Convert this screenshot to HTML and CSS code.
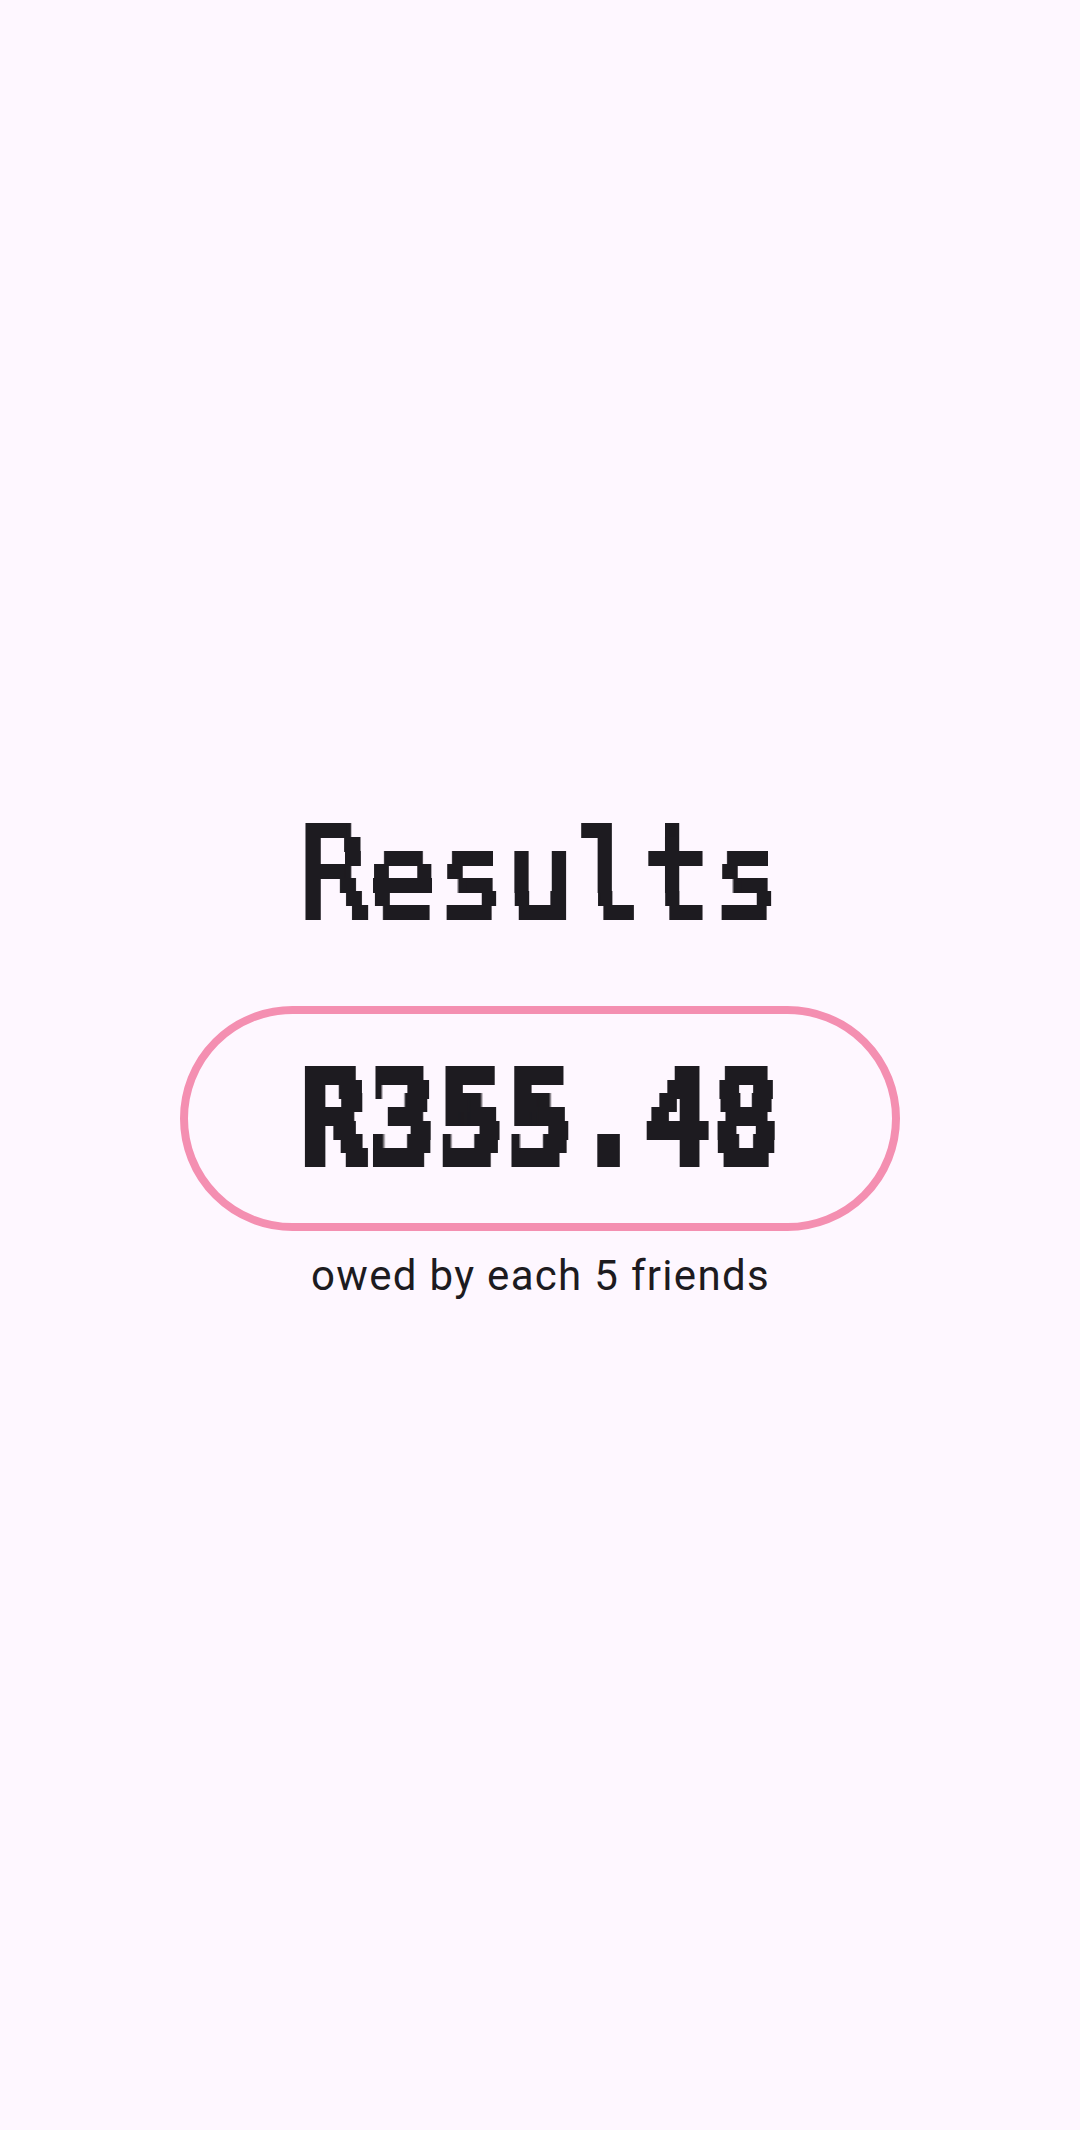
FILE: index.html
```html
<!DOCTYPE html>
<html lang="en">
<head>
<meta charset="utf-8">
<title>Results</title>
<link rel="stylesheet" href="styles.css">
</head>
<body>
<!-- Scanline filters: sample seven rows of the lettering, then thicken each row into a block -->
<svg class="defs" width="0" height="0" aria-hidden="true">
  <filter id="rows-regular" filterUnits="userSpaceOnUse" primitiveUnits="userSpaceOnUse" x="0" y="0" width="520" height="140" color-interpolation-filters="sRGB">
    <feFlood x="0" y="28" width="520" height="1" result="a"/>
    <feFlood x="0" y="44" width="520" height="1" result="b"/>
    <feFlood x="0" y="52" width="520" height="1" result="c"/>
    <feFlood x="0" y="71" width="520" height="1" result="d"/>
    <feFlood x="0" y="85" width="520" height="1" result="e"/>
    <feFlood x="0" y="98" width="520" height="1" result="f"/>
    <feFlood x="0" y="112" width="520" height="1" result="g"/>
    <feMerge result="rows"><feMergeNode in="b"/><feMergeNode in="d"/><feMergeNode in="e"/><feMergeNode in="f"/><feMergeNode in="g"/></feMerge>
    <feComposite in="SourceGraphic" in2="rows" operator="in" result="body"/>
    <feComposite in="SourceGraphic" in2="a" operator="in"/>
    <feOffset dy="2" result="cap"/>
    <feComposite in="SourceGraphic" in2="c" operator="in"/>
    <feOffset dy="6" result="waist"/>
    <feMerge><feMergeNode in="body"/><feMergeNode in="cap"/><feMergeNode in="waist"/></feMerge>
    <feMorphology operator="dilate" radius="1 6.5"/>
  </filter>
  <filter id="rows-bold" filterUnits="userSpaceOnUse" primitiveUnits="userSpaceOnUse" x="0" y="0" width="520" height="139" color-interpolation-filters="sRGB">
    <feFlood x="0" y="26" width="520" height="1" result="a"/>
    <feFlood x="0" y="39" width="520" height="1" result="b"/>
    <feFlood x="0" y="53" width="520" height="1" result="c"/>
    <feFlood x="0" y="67" width="520" height="1" result="d"/>
    <feFlood x="0" y="81" width="520" height="1" result="e"/>
    <feFlood x="0" y="96" width="520" height="1" result="f"/>
    <feFlood x="0" y="108" width="520" height="1" result="g"/>
    <feMerge result="rows"><feMergeNode in="a"/><feMergeNode in="c"/><feMergeNode in="d"/><feMergeNode in="e"/><feMergeNode in="g"/></feMerge>
    <feComposite in="SourceGraphic" in2="rows" operator="in" result="body"/>
    <feComposite in="SourceGraphic" in2="b" operator="in"/>
    <feOffset dy="1" result="upper"/>
    <feComposite in="SourceGraphic" in2="f" operator="in"/>
    <feOffset dy="-2" result="lower"/>
    <feMerge><feMergeNode in="body"/><feMergeNode in="upper"/><feMergeNode in="lower"/></feMerge>
    <feMorphology operator="dilate" radius="1 9"/>
  </filter>
</svg>
<main class="screen">
  <h1 class="title"><span class="tall">Results</span></h1>
  <div class="pill"><div class="amount"><span class="tall">R355.48</span></div></div>
  <p class="caption">owed by each 5 friends</p>
</main>
</body>
</html>
```

FILE: styles.css
```css
* {
  box-sizing: border-box;
  margin: 0;
}

body {
  background: #fef7ff;
  color: #1d1b20;
}

.defs {
  display: block;
}

.screen {
  display: flex;
  flex-direction: column;
  align-items: center;
  height: 2130px;
  padding-top: 800px;
}

.title,
.amount {
  width: 520px;
  text-align: center;
}

.title {
  height: 140px;
  margin-bottom: 66px;
  padding-top: 4px;
  font-weight: 400;
  filter: url(#rows-regular);
}

.tall {
  display: block;
  font-family: "DejaVu Sans Mono", "Liberation Mono", monospace;
  font-size: 114.2px;
  line-height: 139px;
  white-space: nowrap;
  transform: scaleY(1.12);
  -webkit-text-stroke: 2px #1d1b20;
}

.pill {
  display: flex;
  align-items: center;
  justify-content: center;
  width: 720px;
  height: 225px;
  border: 8px solid #f48fb1;
  border-radius: 113px;
}

.amount {
  height: 139px;
  font-weight: 700;
  filter: url(#rows-bold);
}

.caption {
  margin-top: 15px;
  padding-left: 1px;
  font: 400 42px/60px Roboto, sans-serif;
  letter-spacing: 1.31px;
}
```
